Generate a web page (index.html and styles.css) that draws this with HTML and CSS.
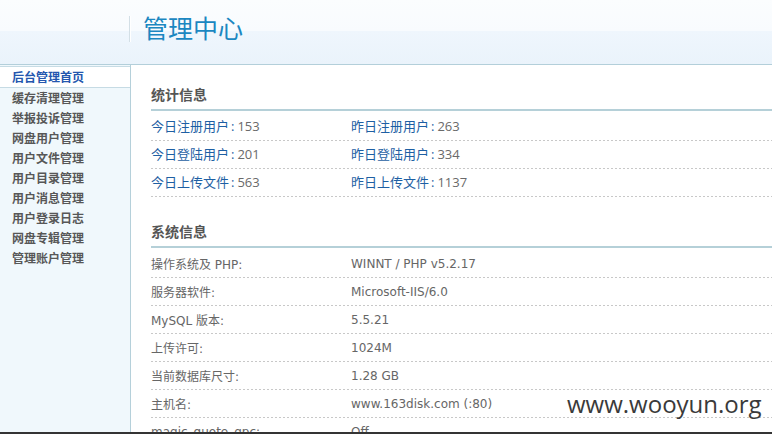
FILE: index.html
```html
<!DOCTYPE html>
<html lang="zh-CN">
<head>
<meta charset="utf-8">
<title>管理中心</title>
<link rel="stylesheet" href="styles.css">
</head>
<body>
<div class="page">
  <header class="header">
    <span class="divider"></span>
    <h1 class="title">管理中心</h1>
  </header>
  <div class="content">
    <nav class="sidebar">
      <a class="item active">后台管理首页</a>
      <a class="item">缓存清理管理</a>
      <a class="item">举报投诉管理</a>
      <a class="item">网盘用户管理</a>
      <a class="item">用户文件管理</a>
      <a class="item">用户目录管理</a>
      <a class="item">用户消息管理</a>
      <a class="item">用户登录日志</a>
      <a class="item">网盘专辑管理</a>
      <a class="item">管理账户管理</a>
    </nav>
    <main class="main">
      <section class="section first">
        <h3 class="sec-title">统计信息</h3>
        <div class="stats">
          <div class="row"><span class="cell"><span class="lbl">今日注册用户<span class="colon">:</span></span><span class="val">153</span></span><span class="cell"><span class="lbl">昨日注册用户<span class="colon">:</span></span><span class="val">263</span></span></div>
          <div class="row"><span class="cell"><span class="lbl">今日登陆用户<span class="colon">:</span></span><span class="val">201</span></span><span class="cell"><span class="lbl">昨日登陆用户<span class="colon">:</span></span><span class="val">334</span></span></div>
          <div class="row"><span class="cell"><span class="lbl">今日上传文件<span class="colon">:</span></span><span class="val">563</span></span><span class="cell"><span class="lbl">昨日上传文件<span class="colon">:</span></span><span class="val">1137</span></span></div>
        </div>
      </section>
      <section class="section second">
        <h3 class="sec-title">系统信息</h3>
        <div class="sys">
          <div class="row"><span class="cell">操作系统及 PHP:</span><span class="cell">WINNT / PHP v5.2.17</span></div>
          <div class="row"><span class="cell">服务器软件:</span><span class="cell">Microsoft-IIS/6.0</span></div>
          <div class="row"><span class="cell">MySQL 版本:</span><span class="cell">5.5.21</span></div>
          <div class="row"><span class="cell">上传许可:</span><span class="cell">1024M</span></div>
          <div class="row"><span class="cell">当前数据库尺寸:</span><span class="cell">1.28 GB</span></div>
          <div class="row"><span class="cell">主机名:</span><span class="cell">www.163disk.com (:80)</span></div>
          <div class="row"><span class="cell">magic_quote_gpc:</span><span class="cell">Off</span></div>
        </div>
      </section>
    </main>
  </div>
  <div class="bottombar"></div>
  <div class="watermark">www.wooyun.org</div>
</div>
</body>
</html>
```
FILE: styles.css
```css
html, body {
  margin: 0;
  padding: 0;
  background: #fff;
}
.page {
  position: relative;
  height: 434px;
  display: flex;
  flex-direction: column;
  overflow: hidden;
  font-family: "DejaVu Sans", "Noto Sans CJK SC", sans-serif;
}
.header {
  flex: none;
  box-sizing: border-box;
  height: 65px;
  border-bottom: 1px solid #b3cfda;
  background: linear-gradient(#fbfdfe 0, #f8fbfe 31px, #eff6fd 31px, #eaf3fb 64px);
  display: flex;
  align-items: flex-start;
  padding-left: 129px;
  padding-top: 12px;
}
.divider {
  display: block;
  width: 0;
  height: 26px;
  margin-top: 4px;
  border-left: 1px solid #d3dfe6;
  border-right: 1px solid #ffffff;
}
.title {
  margin: 0 0 0 12px;
  font-family: "Noto Sans CJK SC", sans-serif;
  font-weight: 400;
  font-size: 25px;
  line-height: 30px;
  color: #1b87c1;
}
.content {
  flex: 1;
  display: flex;
  min-height: 0;
  overflow: hidden;
}
.sidebar {
  flex: none;
  width: 130px;
  border-right: 1px solid #b5d0da;
  background: #f0f8fc;
  padding-top: 1px;
  display: flex;
  flex-direction: column;
}
.item {
  display: block;
  height: 20px;
  line-height: 20px;
  padding-left: 12px;
  font-family: "Noto Sans CJK SC", sans-serif;
  font-size: 12px;
  font-weight: 700;
  color: #575757;
}
.item.active {
  background: #fff;
  color: #2356ae;
  border-top: 1px solid #c6dbe4;
  border-bottom: 1px solid #c6dbe4;
}
.main {
  flex: 1;
  min-width: 0;
  padding-left: 20px;
}
.section.first {
  margin-top: 15px;
}
.section.second {
  margin-top: 20px;
}
.sec-title {
  margin: 0;
  height: 29px;
  line-height: 29px;
  font-family: "Noto Sans CJK SC", sans-serif;
  font-size: 14px;
  font-weight: 700;
  color: #555;
  border-bottom: 2px solid #b5d0d8;
}
.stats, .sys {
  margin-top: 2px;
}
.row {
  display: grid;
  grid-template-columns: 200px 1fr;
  box-sizing: border-box;
  height: 28px;
  align-items: center;
  background-image: repeating-linear-gradient(90deg, #c8c8c8 0 2px, transparent 2px 4px);
  background-size: 100% 1px;
  background-repeat: no-repeat;
  background-position: left bottom;
}
.stats .row {
  font-family: "Open Sans", "Noto Sans CJK SC", sans-serif;
  font-size: 13px;
  padding-bottom: 3px;
}
.lbl {
  color: #1e5fa3;
}
.colon {
  margin: 0 3px 0 2px;
}
.val {
  color: #6a6a6a;
}
.sys .row {
  font-size: 12px;
  color: #666;
  padding-bottom: 1px;
}
.bottombar {
  flex: none;
  height: 2px;
  background: #343434;
}
.watermark {
  position: absolute;
  left: 567px;
  top: 392px;
  font-family: "Open Sans", sans-serif;
  font-size: 24px;
  line-height: 24px;
  color: #3a3a3a;
}
```
